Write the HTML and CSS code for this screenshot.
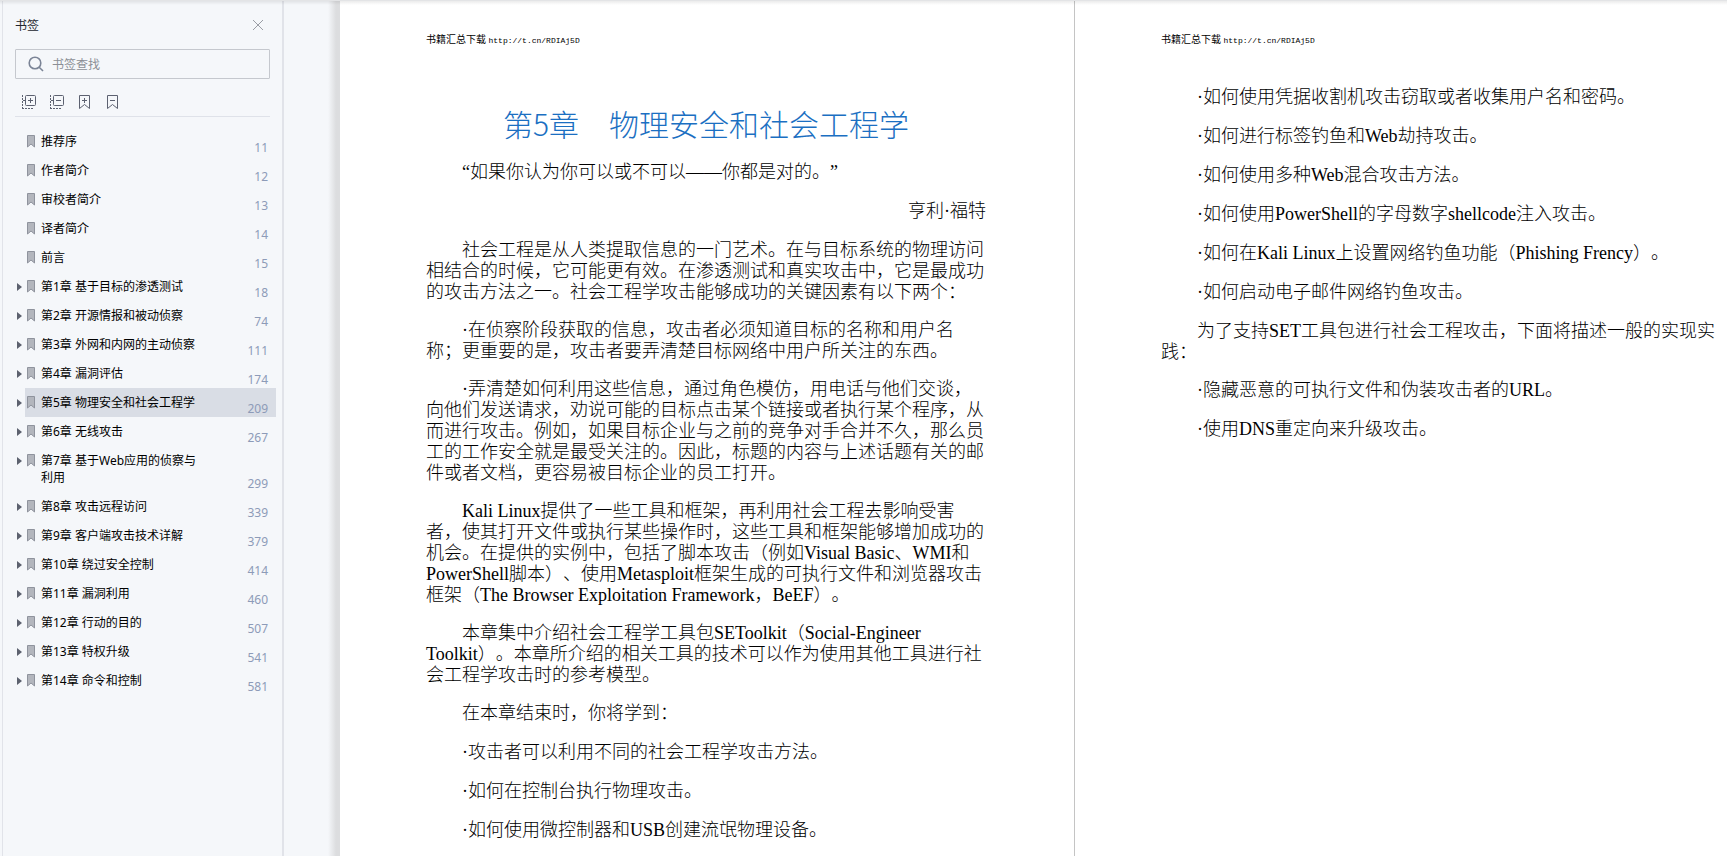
FILE: index.html
```
<!DOCTYPE html>
<html lang="zh-CN">
  <head>
    <meta charset="UTF-8" />
    <meta name="viewport" content="width=device-width, initial-scale=1.0" />
    <title>第5章 物理安全和社会工程学</title>
    <link rel="stylesheet" href="styles.css">
  </head>
  <body>
    <!-- icons shared by the bookmark rows -->
    <svg width="0" height="0" class="sprite" aria-hidden="true">
      <symbol id="mark" viewBox="0 0 8 13">
        <path d="M0.5 0.5h7v11.5L4 9 0.5 12z" fill="#b3b6bd" stroke="#8f939d" />
      </symbol>
      <symbol id="arrow" viewBox="0 0 5 8">
        <path d="M0 0l5 4-5 4z" fill="#5c616e" />
      </symbol>
    </svg>

    <div class="app">
      <aside class="sidebar">
        <header class="sidebar-head">
          <h2>书签</h2>
          <button type="button" aria-label="关闭">
            <svg width="12" height="12" viewBox="0 0 12 12"><path d="M1 1l10 10M11 1L1 11" fill="none" stroke="#9a9da5" /></svg>
          </button>
        </header>

        <label class="search">
          <svg width="16" height="16" viewBox="0 0 16 16" fill="none" stroke="#7b8496" stroke-width="1.6"><circle cx="7" cy="7" r="5.8" /><path d="M11.2 11.2l3.8 3.8" /></svg>
          <input type="text" placeholder="书签查找" aria-label="书签查找" />
        </label>

        <div class="tools">
          <button type="button" aria-label="展开">
            <svg width="16" height="16" viewBox="0 0 16 16" fill="none" stroke="#5c6170"><rect x="4.5" y="1.5" width="10" height="10" rx="1" /><path d="M7 6.5h5M9.5 4v5M2 6.5h2" /><path d="M1.5 1v14M1 14.5h11" stroke-dasharray="2 1" /></svg>
          </button>
          <button type="button" aria-label="收起">
            <svg width="16" height="16" viewBox="0 0 16 16" fill="none" stroke="#5c6170"><rect x="4.5" y="1.5" width="10" height="10" rx="1" /><path d="M7 6.5h5M2 6.5h2" /><path d="M1.5 1v14M1 14.5h11" stroke-dasharray="2 1" /></svg>
          </button>
          <button type="button" aria-label="添加书签">
            <svg width="16" height="16" viewBox="0 0 16 16" fill="none" stroke="#5c6170"><path d="M2.5 1.5h10v13l-5-4-5 4zM5 6.5h5M7.5 4v5" /></svg>
          </button>
          <button type="button" aria-label="删除书签">
            <svg width="16" height="16" viewBox="0 0 16 16" fill="none" stroke="#5c6170"><path d="M2.5 1.5h10v13l-5-4-5 4zM5 6.5h5" /></svg>
          </button>
        </div>

        <nav>
          <ul class="bookmarks" id="bookmarks"></ul>
        </nav>
      </aside>

      <main class="viewer">
        <article class="page">
          <div class="page-head">书籍汇总下载 <a href="http://t.cn/RDIAj5D">http://t.cn/RDIAj5D</a></div>
          <h1>第5章　物理安全和社会工程学</h1>
          <p class="short">“如果你认为你可以或不可以——你都是对的。”</p>
          <p class="short author">亨利·福特</p>
          <p>社会工程是从人类提取信息的一门艺术。在与目标系统的物理访问相结合的时候，它可能更有效。在渗透测试和真实攻击中，它是最成功的攻击方法之一。社会工程学攻击能够成功的关键因素有以下两个：</p>
          <p>·在侦察阶段获取的信息，攻击者必须知道目标的名称和用户名称；更重要的是，攻击者要弄清楚目标网络中用户所关注的东西。</p>
          <p>·弄清楚如何利用这些信息，通过角色模仿，用电话与他们交谈，向他们发送请求，劝说可能的目标点击某个链接或者执行某个程序，从而进行攻击。例如，如果目标企业与之前的竞争对手合并不久，那么员工的工作安全就是最受关注的。因此，标题的内容与上述话题有关的邮件或者文档，更容易被目标企业的员工打开。</p>
          <p>Kali Linux提供了一些工具和框架，再利用社会工程去影响受害者，使其打开文件或执行某些操作时，这些工具和框架能够增加成功的机会。在提供的实例中，包括了脚本攻击（例如Visual Basic、WMI和PowerShell脚本）、使用Metasploit框架生成的可执行文件和浏览器攻击框架（The Browser Exploitation Framework，BeEF）。</p>
          <p>本章集中介绍社会工程学工具包SEToolkit（Social-Engineer Toolkit）。本章所介绍的相关工具的技术可以作为使用其他工具进行社会工程学攻击时的参考模型。</p>
          <p class="short">在本章结束时，你将学到：</p>
          <p class="short">·攻击者可以利用不同的社会工程学攻击方法。</p>
          <p class="short">·如何在控制台执行物理攻击。</p>
          <p class="short">·如何使用微控制器和USB创建流氓物理设备。</p>
        </article>

        <article class="page">
          <div class="page-head">书籍汇总下载 <a href="http://t.cn/RDIAj5D">http://t.cn/RDIAj5D</a></div>
          <p class="short">·如何使用凭据收割机攻击窃取或者收集用户名和密码。</p>
          <p class="short">·如何进行标签钓鱼和Web劫持攻击。</p>
          <p class="short">·如何使用多种Web混合攻击方法。</p>
          <p class="short">·如何使用PowerShell的字母数字shellcode注入攻击。</p>
          <p class="short">·如何在Kali Linux上设置网络钓鱼功能（Phishing Frency）。</p>
          <p class="short">·如何启动电子邮件网络钓鱼攻击。</p>
          <p>为了支持SET工具包进行社会工程攻击，下面将描述一般的实现实践：</p>
          <p class="short">·隐藏恶意的可执行文件和伪装攻击者的URL。</p>
          <p class="short">·使用DNS重定向来升级攻击。</p>
        </article>
      </main>
    </div>

    <script>
      const bookmarks = [
        { title: "推荐序", page: 11 },
        { title: "作者简介", page: 12 },
        { title: "审校者简介", page: 13 },
        { title: "译者简介", page: 14 },
        { title: "前言", page: 15 },
        { title: "第1章 基于目标的渗透测试", page: 18, children: true },
        { title: "第2章 开源情报和被动侦察", page: 74, children: true },
        { title: "第3章 外网和内网的主动侦察", page: 111, children: true },
        { title: "第4章 漏洞评估", page: 174, children: true },
        { title: "第5章 物理安全和社会工程学", page: 209, children: true, active: true },
        { title: "第6章 无线攻击", page: 267, children: true },
        { title: "第7章 基于Web应用的侦察与利用", page: 299, children: true },
        { title: "第8章 攻击远程访问", page: 339, children: true },
        { title: "第9章 客户端攻击技术详解", page: 379, children: true },
        { title: "第10章 绕过安全控制", page: 414, children: true },
        { title: "第11章 漏洞利用", page: 460, children: true },
        { title: "第12章 行动的目的", page: 507, children: true },
        { title: "第13章 特权升级", page: 541, children: true },
        { title: "第14章 命令和控制", page: 581, children: true },
      ];

      document.getElementById("bookmarks").innerHTML = bookmarks
        .map(
          (b) => `
          <li>
            <span class="toggle">${
              b.children
                ? `<button type="button" aria-label="展开"><svg width="5" height="8"><use href="#arrow" /></svg></button>`
                : ""
            }</span>
            <a href="#" class="${b.active ? "row active" : "row"}">
              <svg class="mark" width="8" height="13"><use href="#mark" /></svg>
              <span class="title">${b.title}</span>
              <span class="number">${b.page}</span>
            </a>
          </li>`
        )
        .join("");
    </script>
  </body>
</html>
```
FILE: styles.css
```
* {
  box-sizing: border-box;
}

body {
  margin: 0;
  background-color: #f5f7fa;
  font-family: "Noto Sans", "Noto Sans CJK SC", sans-serif;
  font-size: 12px;
  color: #000;
  text-spacing-trim: space-all;
  text-autospace: no-autospace;
}

button {
  display: flex;
  padding: 0;
  border: none;
  background: none;
  cursor: pointer;
}

a {
  color: inherit;
  text-decoration: none;
}

.sprite {
  position: absolute;
}

.app {
  position: relative;
  display: flex;
  height: 100vh;
  overflow: hidden;
  border-top: 1px solid #e3e4e6;
}

/* shadow under the toolbar edge */
.app::before {
  content: "";
  position: absolute;
  top: 0;
  left: 0;
  right: 0;
  height: 4px;
  background: linear-gradient(rgba(0, 0, 0, 0.08), rgba(0, 0, 0, 0));
  pointer-events: none;
}

/* bookmark panel */
.sidebar {
  flex: 0 0 282px;
  margin-left: 2px;
  border-left: 1px solid #e1e3e9;
  border-right: 2px solid #e1e3e9;
}

.sidebar-head {
  display: flex;
  align-items: center;
  justify-content: space-between;
  height: 48px;
  padding: 0 18px 0 12px;
}

.sidebar-head h2 {
  margin: 0;
  font-size: 12px;
  font-weight: 400;
  color: #22252e;
}

.search {
  display: flex;
  align-items: center;
  gap: 8px;
  height: 30px;
  margin: 0 12px;
  padding: 0 12px;
  border: 1px solid #c5c8ce;
  border-radius: 1px;
}

.search input {
  flex: 1;
  min-width: 0;
  padding: 0;
  border: none;
  outline: none;
  background: none;
  font: inherit;
}

.search input::placeholder {
  color: #8c8f96;
}

.tools {
  display: flex;
  align-items: center;
  gap: 12px;
  height: 38px;
  margin: 0 12px;
  padding: 8px 6px 0;
  border-bottom: 1px solid #dfe2e9;
}

.bookmarks {
  margin: 0;
  padding: 10px 6px 0 12px;
  list-style: none;
}

.bookmarks li {
  display: flex;
}

.toggle {
  flex: 0 0 10px;
  padding: 11px 0 0 2px;
}

.row {
  flex: 1;
  display: flex;
  padding: 6px 8px 6px 2px;
  line-height: 17px;
}

.row.active {
  background-color: #d9dde5;
}

.mark {
  flex: none;
  margin: 2px 6px 0 0;
}

.title {
  width: 164px;
}

.number {
  align-self: flex-end;
  margin: 0 0 -6px auto;
  color: #8d9bb8;
}

/* document */
.viewer {
  flex: 1;
  display: flex;
  min-width: 0;
  overflow: hidden;
  padding-left: 56px;
  background: linear-gradient(to right, #f5f7fa 44px, #dcdddf 52px);
}

.page {
  flex: 0 0 735px;
  padding: 31px 88px 0 86px;
  border-right: 1px solid #c4c4c4;
  background-color: #fff;
  font-family: "Liberation Serif", "Noto Sans CJK SC", serif;
  font-size: 18px;
  font-weight: 300;
  line-height: 21px;
}

.page-head {
  height: 55px;
  font-size: 10px;
  font-weight: 400;
  line-height: 16px;
}

.page-head a {
  font-family: "Liberation Mono", monospace;
  font-size: 8px;
}

.page h1 {
  margin: 15px 0 18px;
  font-family: "Noto Sans CJK SC", sans-serif;
  font-size: 30px;
  font-weight: 300;
  line-height: 42px;
  text-align: center;
  color: #1b6fc2;
}

.page p {
  margin: 0 0 17px;
  text-indent: 36px;
}

.page p.short {
  margin-bottom: 18px;
}

.page .author {
  text-align: right;
}
```
